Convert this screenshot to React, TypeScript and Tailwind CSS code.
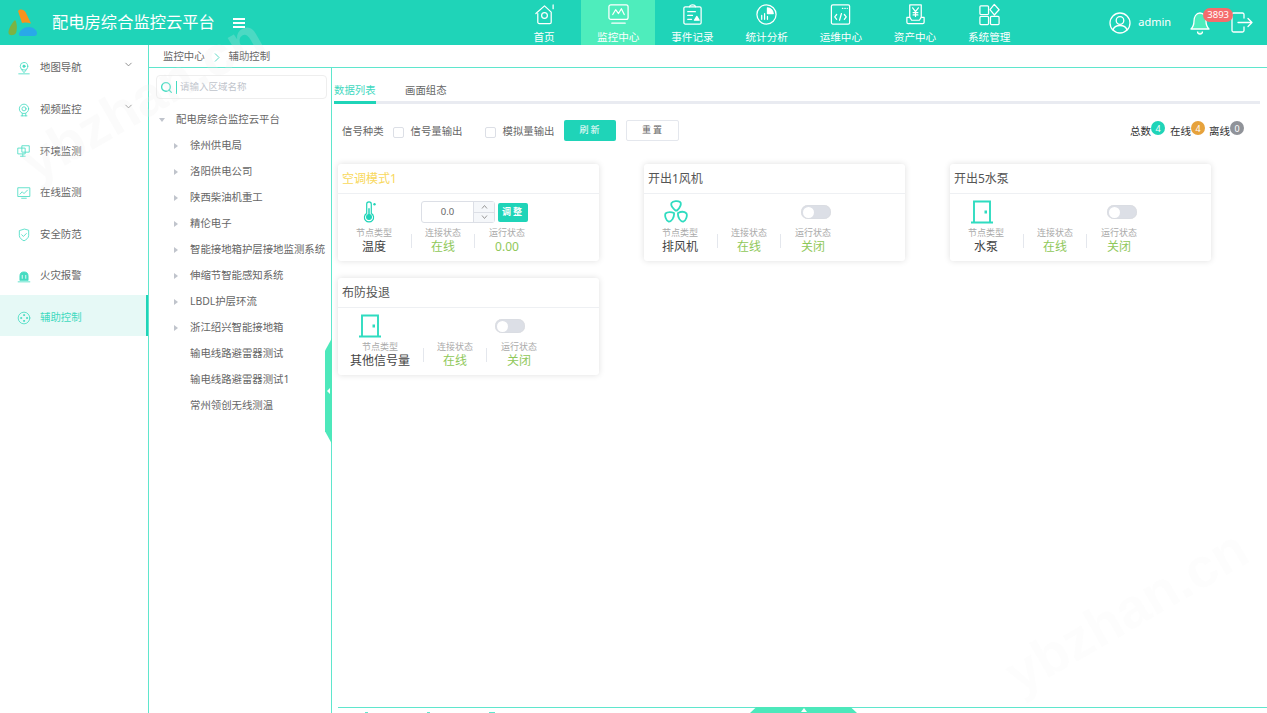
import { ReactNode } from "react";
import { ChevronDown, Search } from "lucide-react";

const Ico = ({ size = 24, sw = 1.6, children }: { size?: number; sw?: number; children: ReactNode }) => (
  <svg width={size} height={size} viewBox="0 0 24 24" fill="none" stroke="currentColor" strokeWidth={sw} strokeLinecap="round" strokeLinejoin="round">
    {children}
  </svg>
);

const navItems: { label: string; active?: boolean; icon: ReactNode }[] = [
  {
    label: "首页",
    icon: (
      <>
        <path d="M3 11 12 3l7 6.500V20a1.500 1.500 0 0 1-1.500 1.500h-11A1.500 1.500 0 0 1 5 20v-9" />
        <circle cx="12" cy="13" r="3" />
        <path d="M21 2v4" />
      </>
    ),
  },
  {
    label: "监控中心",
    active: true,
    icon: (
      <>
        <rect x="2" y="2" width="20" height="15" rx="2" />
        <path d="m6 12 3-5 3 4 3-5 3 6" />
        <path d="M5 21h14" />
      </>
    ),
  },
  {
    label: "事件记录",
    icon: (
      <>
        <rect x="3" y="4" width="18" height="18" rx="1.500" />
        <path d="M9 4a3 2 0 0 1 6 0M7 9h8M7 13h5M7 17h4" />
        <path d="m14 18 2.500-4 2.500 4z" fill="currentColor" />
      </>
    ),
  },
  {
    label: "统计分析",
    icon: (
      <>
        <circle cx="12" cy="12" r="10" />
        <path d="M13 5a6.500 6.500 0 0 1 6 6h-6z" fill="currentColor" />
        <path d="M7 17v-4M10 17v-6M13 17v-3" />
      </>
    ),
  },
  {
    label: "运维中心",
    icon: (
      <>
        <rect x="2.500" y="2" width="19" height="20" rx="1.500" />
        <path d="M14 5.500h.5M16.500 5.500h.5M19 5.500h.1" />
        <path d="m8 12-2 2.500L8 17M16 12l2 2.500-2 2.500M13 11l-2 7" />
      </>
    ),
  },
  {
    label: "资产中心",
    icon: (
      <>
        <path d="M6 15V2h12v13" />
        <path d="M6 15H3v5a1.500 1.500 0 0 0 1.500 1.500h15A1.500 1.500 0 0 0 21 20v-5h-3l-2 3H8z" />
        <path d="m9 5 3 4 3-4M12 9v5M9.500 10h5M9.500 12.500h5" />
      </>
    ),
  },
  {
    label: "系统管理",
    icon: (
      <>
        <rect x="2" y="3" width="9" height="9" rx="1" />
        <path d="m17 1.500 5 5.500-5 5.500L12.500 7z" />
        <rect x="2" y="14" width="9" height="8.500" rx="1" />
        <rect x="13" y="14" width="9" height="8.500" rx="1" />
      </>
    ),
  },
];

const sideItems: { label: string; arrow?: boolean; active?: boolean; icon: ReactNode }[] = [
  {
    label: "地图导航",
    arrow: true,
    icon: (
      <>
        <circle cx="12" cy="9" r="6.500" />
        <circle cx="12" cy="9" r="2" fill="currentColor" />
        <path d="M8 15l4 5 4-5M3 22h18" />
      </>
    ),
  },
  {
    label: "视频监控",
    arrow: true,
    icon: (
      <>
        <circle cx="12" cy="10" r="8" />
        <circle cx="12" cy="10" r="3.500" />
        <path d="M7 22h10M9 18v4M15 18v4" />
      </>
    ),
  },
  {
    label: "环境监测",
    icon: (
      <>
        <rect x="2" y="7" width="12" height="10" />
        <rect x="9" y="3" width="12" height="11" />
        <path d="M6 21h8M10 17v4" />
      </>
    ),
  },
  {
    label: "在线监测",
    icon: (
      <>
        <rect x="2" y="3" width="20" height="15" />
        <path d="m5 14 4-4 3 3 6-6" />
        <path d="M8 21h8" />
      </>
    ),
  },
  {
    label: "安全防范",
    icon: (
      <>
        <path d="M12 2 4 4.500V13c0 4 4 7 8 9 4-2 8-5 8-9V4.500z" />
        <path d="m8 11.500 3 3 5-5" />
      </>
    ),
  },
  {
    label: "火灾报警",
    icon: (
      <>
        <path d="M5 19v-7a7 7 0 0 1 14 0v7z" fill="currentColor" />
        <path d="M2 22h20" />
        <path d="M9 11v5M15 11v5" stroke="#fff" />
      </>
    ),
  },
  {
    label: "辅助控制",
    active: true,
    icon: (
      <>
        <circle cx="12" cy="12" r="10" />
        <circle cx="12" cy="7" r="1" fill="currentColor" />
        <circle cx="7" cy="12" r="1" fill="currentColor" />
        <circle cx="17" cy="12" r="1" fill="currentColor" />
        <circle cx="12" cy="17" r="1" fill="currentColor" />
      </>
    ),
  },
];

const treeItems: { label: string; caret: boolean }[] = [
  { label: "徐州供电局", caret: true },
  { label: "洛阳供电公司", caret: true },
  { label: "陕西柴油机重工", caret: true },
  { label: "精伦电子", caret: true },
  { label: "智能接地箱护层接地监测系统", caret: true },
  { label: "伸缩节智能感知系统", caret: true },
  { label: "LBDL护层环流", caret: true },
  { label: "浙江绍兴智能接地箱", caret: true },
  { label: "输电线路避雷器测试", caret: false },
  { label: "输电线路避雷器测试1", caret: false },
  { label: "常州领创无线测温", caret: false },
];

const Thermo = () => (
  <svg width="22" height="22" viewBox="0 0 24 24" fill="none" stroke="#1fd4b8" strokeWidth="1.300">
    <path d="M9.500 3.500a2.500 2.500 0 0 1 5 0v10a5 5 0 1 1-5 0z" />
    <circle cx="12" cy="17.500" r="2.600" fill="#1fd4b8" />
    <path d="M12 8v8" strokeWidth="1.600" />
    <circle cx="18" cy="3.500" r="1.300" fill="#1fd4b8" stroke="none" />
  </svg>
);

const Fan = () => (
  <svg width="24" height="24" viewBox="0 0 24 24" fill="none" stroke="#2fdcc0" strokeWidth="1.800" strokeLinejoin="round">
    <path d="M11.500 10.500C9 8.500 6.500 5.500 7.500 3 9 1 14 .5 16 2c2 1.500 0 6-3 8.500z" />
    <path d="M10 13c-2-1-6.500-1.500-8.500.5-1 2.500.5 7 3 8 3 .5 6-4 5.500-8.500z" />
    <path d="M14 13c3-1.500 6.500-1.500 8.500.5 1 2.500-.5 7-3 8-3 .5-6-4-5.500-8.500z" />
  </svg>
);

const Door = () => (
  <svg width="24" height="24" viewBox="0 0 24 24" fill="none" stroke="#2fdcc0" strokeWidth="1.900">
    <path d="M4 22.500V1.500h16v21M1 22.500h22" />
    <rect x="14.500" y="10.500" width="2.500" height="3" fill="#2fdcc0" stroke="none" />
  </svg>
);

const Toggle = ({ className }: { className: string }) => (
  <div className={`h-[14px] w-[30px] rounded-full bg-[#dcdfe6] p-[1.5px] shadow-[inset_0_0_1px_#ccc] ${className}`}>
    <div className="h-[11px] w-[11px] rounded-full bg-white" />
  </div>
);

const Stat = ({ label, value, first, wide, last }: { label: string; value: string; first?: boolean; wide?: boolean; last?: boolean }) => (
  <div className={`flex flex-col items-center ${first ? (wide ? "ml-3 w-[60px]" : "ml-3 w-12") : last ? "ml-px w-9" : "w-9"}`}>
    <span className="text-[9px] leading-[12px] text-[#aaaaaa] whitespace-nowrap">{label}</span>
    <span className={`text-[12px] leading-[16px] whitespace-nowrap ${first ? "text-[#444444]" : "text-[#8fc85a]"}`}>{value}</span>
  </div>
);

const Sep = () => <div className="mx-[13px] mt-[7px] h-[14px] w-px bg-[#e4e7ed]" />;

const Card = ({ title, titleClass, top, type, run, wide }: { title: string; titleClass?: string; top: ReactNode; type: string; run: string; wide?: boolean }) => (
  <div className="h-[97px] w-[261px] rounded-[3px] bg-white shadow-[0_0_6px_rgba(0,0,0,0.13)]">
    <div className={`h-[30px] border-b border-[#eef0f3] pl-1 text-[12px] leading-[29px] ${titleClass ?? "text-[#555555]"}`}>{title}</div>
    <div className="flex h-[33px] items-center pt-[3px]">{top}</div>
    <div className="flex">
      <Stat first wide={wide} label="节点类型" value={type} />
      <Sep />
      <Stat label="连接状态" value="在线" />
      <Sep />
      <Stat last label="运行状态" value={run} />
    </div>
  </div>
);

const Badge = ({ n, color }: { n: number; color: string }) => (
  <span className={`-mt-[7px] flex h-[14px] w-[14px] items-center justify-center rounded-full text-[9px] leading-none text-white ${color}`}>{n}</span>
);

export default function App() {
  return (
    <div className="relative flex h-screen w-full flex-col overflow-hidden bg-white font-['Noto_Sans','Noto_Sans_CJK_SC',sans-serif] text-[#666666]">
      <header className="flex h-[45px] shrink-0 items-center bg-[#1fd4b8] text-white">
        <svg className="ml-2 shrink-0" width="29" height="27" viewBox="0 0 29 27">
          <path d="M10 2c2-2.500 6-1.500 7.500 1L23 14.500c-3-1-7-1.500-9-.5z" fill="#f7931e" />
          <path d="M7 11C4 14 0 20 0.500 24c.5 3 5.500 3 7.500 0 1-3 1.500-10-1-13z" fill="#7cb342" />
          <path d="M11 25c1-4 5-7 10-7 4 0 8 3 8 6 0 2-1 3-3 3H13c-1.500 0-2.500-1-2-2z" fill="#29a9e8" />
        </svg>
        <div className="ml-[15px] w-[163px] text-[16.3px] leading-none whitespace-nowrap">配电房综合监控云平台</div>
        <div className="ml-[18px] flex w-3 flex-col gap-[2px]">
          <div className="h-[2px] bg-white" />
          <div className="h-[2px] bg-white" />
          <div className="h-[2px] bg-white" />
        </div>
        <nav className="ml-[262px] flex h-full">
          {navItems.map((it) => (
            <div key={it.label} className={`flex h-full w-[74.2px] flex-col items-center pt-[3px] ${it.active ? "bg-[#4eedbc]" : ""}`}>
              <Ico size={23} sw={1.3}>{it.icon}</Ico>
              <span className="mt-[4px] text-[10.6px] leading-[14px] whitespace-nowrap">{it.label}</span>
            </div>
          ))}
        </nav>
        <div className="ml-[82px] flex items-center">
          <Ico size={24} sw={1.3}>
            <circle cx="12" cy="12" r="10" />
            <circle cx="12" cy="9.500" r="3.800" />
            <path d="M5 19c1-3.500 4-4.500 7-4.500s6 1 7 4.500" />
          </Ico>
          <span className="ml-[6px] text-[11px]">admin</span>
          <div className="relative ml-[19px] flex">
            <svg width="20" height="24" viewBox="0 0 20 24" fill="#4eedbc" stroke="#fff" strokeWidth="1.300" strokeLinejoin="round">
              <path d="M10 2c4 0 6 4 6 8 0 4 2 7 3 8H1c1-1 3-4 3-8 0-4 2-8 6-8z" />
              <path d="M7.500 20.500a2.500 2.500 0 0 0 5 0" />
            </svg>
            <span className="absolute -top-[3px] left-[13px] flex h-[14px] w-[30px] items-center justify-center rounded-full bg-[#f56c6c] text-[9.5px] leading-none">3893</span>
          </div>
          <svg className="ml-[21px]" width="22" height="21" viewBox="0 0 22 21" fill="none" stroke="#fff" strokeWidth="1.300" strokeLinecap="round" strokeLinejoin="round">
            <path d="M13 6V2.500A1.500 1.500 0 0 0 11.500 1H2.500A1.500 1.500 0 0 0 1 2.500v16A1.500 1.500 0 0 0 2.500 20h9a1.500 1.500 0 0 0 1.500-1.500V15" />
            <path d="M7 10.500h14M17 6.500l4 4-4 4" />
          </svg>
        </div>
      </header>

      <div className="flex min-h-0 flex-1">
        <aside className="w-[149px] shrink-0 border-r border-[#5fe6cd]">
          {sideItems.map((it) => (
            <div key={it.label} className={`relative flex h-[41.6px] items-center pt-[5px] pl-[17px] text-[10.4px] ${it.active ? "bg-[#e6f9f6] text-[#3fd9bf]" : "text-[#666666]"}`}>
              <span className="text-[#45dcc2]">
                <Ico size={14} sw={1.4}>{it.icon}</Ico>
              </span>
              <span className="ml-[9px] whitespace-nowrap">{it.label}</span>
              {it.arrow && <ChevronDown className="absolute top-[14px] right-[14px] text-[#888888]" size={11} />}
              {it.active && <div className="absolute top-0 right-0 h-full w-[2px] bg-[#1fd4b8]" />}
            </div>
          ))}
        </aside>

        <div className="flex min-w-0 flex-1 flex-col">
          <div className="flex h-[23px] shrink-0 items-center border-b border-[#5fe6cd] pt-[2px] pl-[14px] text-[10.4px] text-[#666666]">
            <span>监控中心</span>
            <svg className="mx-[9px]" width="6" height="9" viewBox="0 0 6 9" fill="none" stroke="#5fd9c5" strokeWidth="1">
              <path d="m1 .5 4 4-4 4" />
            </svg>
            <span>辅助控制</span>
          </div>

          <div className="flex min-h-0 flex-1">
            <section className="relative w-[183px] shrink-0 border-r border-[#5fe6cd]">
              <div className="mt-[7px] ml-[7px] flex h-[24px] w-[171px] items-center rounded-[4px] border border-[#eeeeee] pl-[3px]">
                <Search className="text-[#45dcc2]" size={13} strokeWidth={2.500} />
                <div className="ml-[3px] h-[13px] w-px bg-[#45dcc2]" />
                <span className="ml-[3px] text-[9.500px] whitespace-nowrap text-[#c0c4cc]">请输入区域名称</span>
              </div>
              <div className="mt-[8px] flex h-[26px] items-center text-[10.4px]">
                <span className="ml-[10px] h-0 w-0 border-x-[3px] border-t-[4px] border-x-transparent border-t-[#c0c4cc]" />
                <span className="ml-[11px] whitespace-nowrap">配电房综合监控云平台</span>
              </div>
              {treeItems.map((t) => (
                <div key={t.label} className="flex h-[26px] items-center pl-[25px] text-[10.4px]">
                  {t.caret ? <span className="h-0 w-0 border-y-[3px] border-l-[4px] border-y-transparent border-l-[#c0c4cc]" /> : <span className="w-1" />}
                  <span className="ml-[12px] whitespace-nowrap">{t.label}</span>
                </div>
              ))}
              <div className="absolute top-[270px] -right-px flex h-[106px] w-[7px] items-center justify-center bg-[#4de8bb] [clip-path:polygon(100%_0,100%_100%,0_88%,0_12%)]">
                <span className="h-0 w-0 border-y-[3px] border-r-[3px] border-y-transparent border-r-white" />
              </div>
            </section>

            <main className="relative min-w-0 flex-1">
              <div className="mt-[15px] mr-[7px] ml-[2px] flex h-[21px] border-b-[3px] border-[#e9ebf1] text-[10.4px]">
                <div className="h-[21px] w-[42px] border-b-[3px] border-[#1fd4b8] whitespace-nowrap text-[#3fd9bf]">数据列表</div>
                <div className="ml-[29px] whitespace-nowrap text-[#666666]">画面组态</div>
              </div>

              <div className="relative mt-[15px] flex h-[24px] items-center pt-[2px] pl-[10px] text-[10.4px] whitespace-nowrap">
                <span>信号种类</span>
                <span className="ml-[9px] h-[11px] w-[11px] rounded-[2px] border border-[#dcdfe6]" />
                <span className="ml-[7px]">信号量输出</span>
                <span className="ml-[22px] h-[11px] w-[11px] rounded-[2px] border border-[#dcdfe6]" />
                <span className="ml-[7px]">模拟量输出</span>
                <button className="ml-[10px] h-[21px] w-[52px] -translate-y-[2px] rounded-[2px] bg-[#1fd4b8] text-[9px] tracking-[2px] text-white">刷新</button>
                <button className="ml-[10px] h-[21px] w-[53px] -translate-y-[2px] rounded-[2px] border border-[#e4e7ed] text-[9px] tracking-[2px] text-[#666666]">重置</button>
                <div className="absolute top-[5px] right-[23px] flex items-center text-[10.5px] text-[#333333]">
                  <span>总数</span>
                  <Badge n={4} color="bg-[#1fd4b8]" />
                  <span className="ml-[5px]">在线</span>
                  <Badge n={4} color="bg-[#e6a23c]" />
                  <span className="ml-[4px]">离线</span>
                  <Badge n={0} color="bg-[#909399]" />
                </div>
              </div>

              <div className="mt-[21px] ml-[6px] grid grid-cols-[261px_261px_261px] gap-x-[45px] gap-y-[17px]">
                <Card
                  title="空调模式1"
                  titleClass="text-[#f8d85c]"
                  type="温度"
                  run="0.00"
                  top={
                    <>
                      <div className="ml-3 flex w-12 -translate-x-[5px] justify-center"><Thermo /></div>
                      <div className="ml-[23px] flex h-[22px] w-[74px] rounded-[3px] border border-[#dcdfe6]">
                        <span className="flex-1 text-center text-[9.500px] leading-[20px] text-[#666666]">0.0</span>
                        <div className="flex w-[21px] flex-col border-l border-[#dcdfe6] bg-[#f5f7fa] text-[#999999]">
                          <div className="flex flex-1 items-center justify-center border-b border-[#dcdfe6]">
                            <svg width="7" height="4" viewBox="0 0 7 4" fill="none" stroke="currentColor"><path d="m1 3.500 2.500-3 2.500 3" /></svg>
                          </div>
                          <div className="flex flex-1 items-center justify-center">
                            <svg width="7" height="4" viewBox="0 0 7 4" fill="none" stroke="currentColor"><path d="m1 .5 2.500 3 2.500-3" /></svg>
                          </div>
                        </div>
                      </div>
                      <button className="ml-[3px] h-[19px] w-[30px] rounded-[2px] bg-[#1fd4b8] text-[9px] font-bold tracking-[2px] whitespace-nowrap text-white">调整</button>
                    </>
                  }
                />
                <Card
                  title="开出1风机"
                  type="排风机"
                  run="关闭"
                  top={
                    <>
                      <div className="ml-3 flex w-12 -translate-x-[4px] justify-center"><Fan /></div>
                      <Toggle className="ml-[97px]" />
                    </>
                  }
                />
                <Card
                  title="开出5水泵"
                  type="水泵"
                  run="关闭"
                  top={
                    <>
                      <div className="ml-3 flex w-12 -translate-x-[4px] justify-center"><Door /></div>
                      <Toggle className="ml-[97px]" />
                    </>
                  }
                />
                <Card
                  title="布防投退"
                  type="其他信号量"
                  run="关闭"
                  wide
                  top={
                    <>
                      <div className="ml-3 flex w-[60px] -translate-x-[10px] justify-center"><Door /></div>
                      <Toggle className="ml-[85px]" />
                    </>
                  }
                />
              </div>

              <div className="absolute right-0 bottom-[5px] left-[6px] h-px bg-[#5fe6cd]" />
              <div className="absolute bottom-0 left-[33px] flex gap-[59px]">
                <span className="h-px w-[3px] bg-[#5fe6cd]" />
                <span className="h-px w-[3px] bg-[#5fe6cd]" />
                <span className="h-px w-[6px] bg-[#5fe6cd]" />
              </div>
              <div className="absolute bottom-0 left-[418px] flex h-[6px] w-[107px] justify-center bg-[#4de8bb] [clip-path:polygon(6%_0,94%_0,100%_100%,0_100%)]">
                <span className="mt-[1px] h-0 w-0 border-x-[3px] border-b-[4px] border-x-transparent border-b-white" />
              </div>
            </main>
          </div>
        </div>
      </div>

      <div className="pointer-events-none absolute top-[72px] left-[8px] -rotate-[30deg] font-['Liberation_Sans',sans-serif] text-[55px] leading-none font-bold text-[rgba(235,235,235,0.22)]">ybzhan.cn</div>
      <div className="pointer-events-none absolute top-[584px] left-[992px] -rotate-[30deg] font-['Liberation_Sans',sans-serif] text-[55px] leading-none font-bold text-[rgba(235,235,235,0.12)]">ybzhan.cn</div>
    </div>
  );
}
